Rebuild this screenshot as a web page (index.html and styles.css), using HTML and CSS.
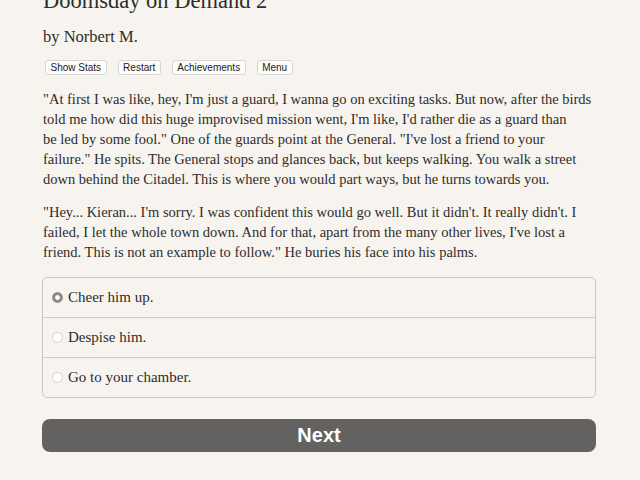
FILE: index.html
```html
<!DOCTYPE html>
<html>
<head>
  <title>Doomsday on Demand 2</title>
  <link rel="stylesheet" href="styles.css">
</head>
<body>
  <div class="container">
    <h1 class="title">Doomsday on Demand 2</h1>
    <h2 class="author">by Norbert M.</h2>
    <div class="buttons">
      <button class="spacedLink">Show Stats</button>
      <button class="spacedLink">Restart</button>
      <button class="spacedLink">Achievements</button>
      <button class="spacedLink">Menu</button>
    </div>
    <div class="text">
      <p>"At first I was like, hey, I'm just a guard, I wanna go on exciting tasks. But now, after the birds<br>
        told me how did this huge improvised mission went, I'm like, I'd rather die as a guard than<br>
        be led by some fool." One of the guards point at the General. "I've lost a friend to your<br>
        failure." He spits. The General stops and glances back, but keeps walking. You walk a street<br>
        down behind the Citadel. This is where you would part ways, but he turns towards you.</p>
      <p>"Hey... Kieran... I'm sorry. I was confident this would go well. But it didn't. It really didn't. I<br>
        failed, I let the whole town down. And for that, apart from the many other lives, I've lost a<br>
        friend. This is not an example to follow." He buries his face into his palms.</p>
    </div>
    <form class="choices">
      <label class="choice"><input type="radio" name="choice" checked> Cheer him up.</label>
      <label class="choice"><input type="radio" name="choice"> Despise him.</label>
      <label class="choice"><input type="radio" name="choice"> Go to your chamber.</label>
    </form>
    <button class="next">Next</button>
  </div>
</body>
</html>
```

FILE: styles.css
```css
body {
  margin: 0;
  padding: 0;
  background-color: #f7f4f0;
  color: #2e2c2a;
  font-family: "Liberation Serif", serif;
}

.container {
  width: 554px;
  margin-left: 42px;
}

.title {
  margin: -13px 0 0 1px;
  font-size: 22.5px;
  font-weight: normal;
  line-height: 28px;
}

.author {
  margin: 12px 0 0 1px;
  font-size: 16.5px;
  font-weight: normal;
  line-height: 20px;
}

.buttons {
  display: flex;
  gap: 11px;
  margin: 13px 0 0 3px;
}

.spacedLink {
  font-family: "Liberation Sans", sans-serif;
  font-size: 10px;
  line-height: 13px;
  padding: 0 4.5px;
  background: #fdfdfc;
  color: #222;
  border: 1px solid #d8d6d2;
  border-radius: 3px;
}

.text {
  margin-top: 14px;
  padding-left: 1px;
}

.text p {
  margin: 0 0 13px;
  font-size: 14.5px;
  line-height: 20px;
}

.choices {
  margin-top: 15px;
  border: 1px solid #c9c7c3;
  border-radius: 5px;
}

.choice {
  display: flex;
  align-items: center;
  height: 39px;
  padding-left: 9px;
  font-size: 15px;
  border-top: 1px solid #cfcdc9;
}

.choice:first-child {
  border-top: none;
}

.choice input {
  appearance: none;
  width: 11px;
  height: 11px;
  margin: 0 5px 0 0;
  border: 1px solid #d6d4d0;
  border-radius: 50%;
  background: #fff;
}

.choice input:checked {
  border-color: #8a8886;
  background: radial-gradient(circle, #fff 0 2px, #8f8d8b 2.5px);
}

.next {
  display: block;
  width: 100%;
  height: 33px;
  margin-top: 21px;
  background-color: #636260;
  color: #fff;
  border: none;
  border-radius: 8px;
  font-family: "Liberation Sans", sans-serif;
  font-size: 20px;
  font-weight: bold;
}
```
